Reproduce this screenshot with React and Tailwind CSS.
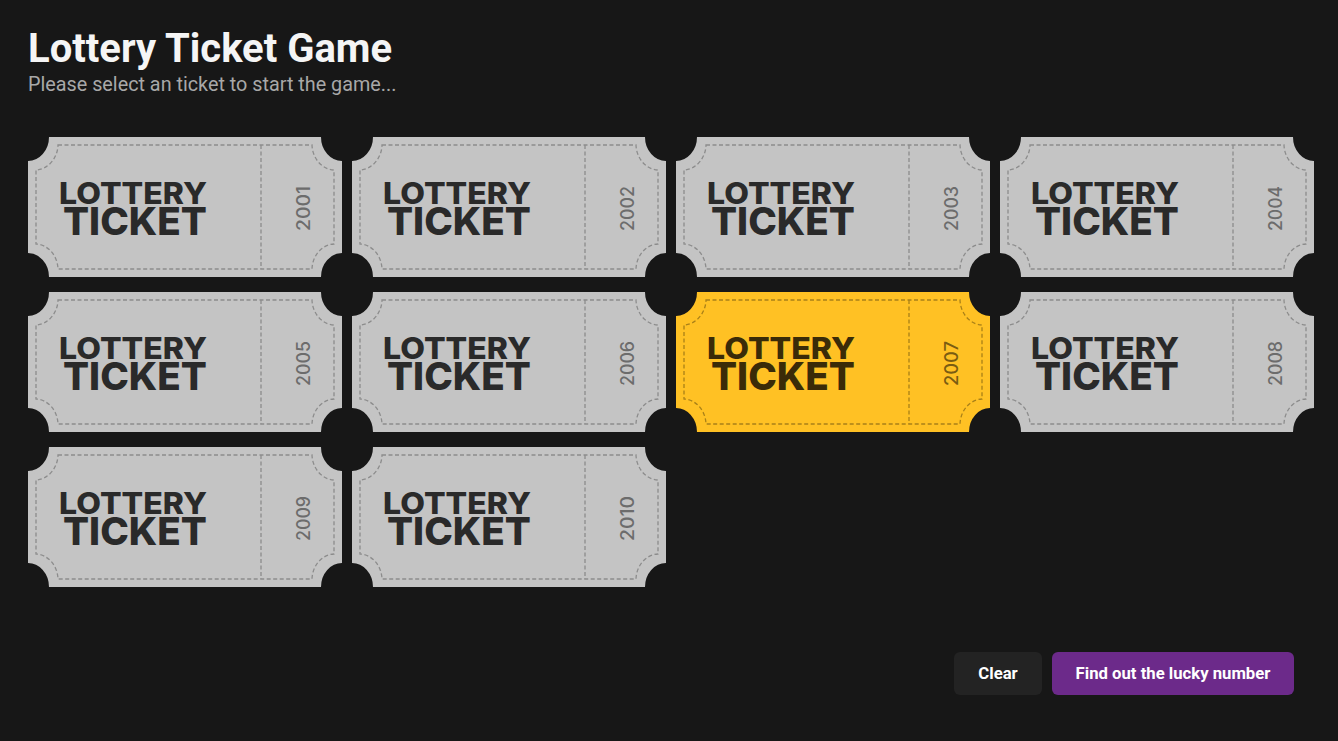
import React, { useState } from 'react';

const W = 314;
const H = 140;
const RX = 23;
const RY = 26;
const IN = 7;

const outline = `M${RX},0 H${W - RX} A${RX} ${RY} 0 0 0 ${W},${RY} V${H - RY} A${RX} ${RY} 0 0 0 ${W - RX},${H} H${RX} A${RX} ${RY} 0 0 0 0,${H - RY} V${RY} A${RX} ${RY} 0 0 0 ${RX},0 Z`;

const ix = RX + IN;
const iy = RY + IN;
const inner = `M${ix},${IN + 1} H${W - ix} A${RX} ${RY} 0 0 0 ${W - IN - 1},${iy} V${H - iy} A${RX} ${RY} 0 0 0 ${W - ix},${H - IN - 1} H${ix} A${RX} ${RY} 0 0 0 ${IN + 1},${H - iy} V${iy} A${RX} ${RY} 0 0 0 ${ix},${IN + 1} Z`;

const Ticket = ({ num, active, onClick }) => {
  const fill = active ? '#ffc124' : '#c4c4c4';
  const ink = active ? '#3a2b08' : '#2a2a2a';
  const dash = active ? '#a98018' : '#8c8c8c';
  const yearInk = active ? '#7a5c12' : '#6c6c6c';
  return (
    <button onClick={onClick} className="block w-[314px] h-[140px] cursor-pointer">
      <svg width={W} height={H} viewBox={`0 0 ${W} ${H}`} className="block">
        <path d={outline} fill={fill} stroke={fill} strokeWidth="4" strokeLinejoin="round" />
        <path d={inner} fill="none" stroke={dash} strokeWidth="1.3" strokeDasharray="4 2.5" />
        <line x1="233" y1={IN + 1} x2="233" y2={H - IN - 1} stroke={dash} strokeWidth="1.3" strokeDasharray="4 2.5" />
        <text
          x="31"
          y="67"
          fill={ink}
          fontFamily="Inter, 'Liberation Sans', sans-serif"
          fontWeight="800"
          fontSize="30"
          textLength="148"
          lengthAdjust="spacingAndGlyphs"
        >
          LOTTERY
        </text>
        <text
          x="35"
          y="98"
          fill={ink}
          fontFamily="Inter, 'Liberation Sans', sans-serif"
          fontWeight="800"
          fontSize="38.5"
          textLength="144"
          lengthAdjust="spacingAndGlyphs"
        >
          TICKET
        </text>
        <text
          transform="translate(282,71.5) rotate(-90)"
          textAnchor="middle"
          fill={yearInk}
          fontFamily="Inter, 'Liberation Sans', sans-serif"
          fontWeight="500"
          fontSize="18"
          textLength="45"
          lengthAdjust="spacingAndGlyphs"
        >
          {num}
        </text>
      </svg>
    </button>
  );
};

export default function App() {
  const [selected, setSelected] = useState(2007);
  const tickets = Array.from({ length: 10 }, (_, i) => 2001 + i);

  return (
    <div className="min-h-screen w-full bg-[#171717] font-['Roboto',sans-serif] pl-[28px] pt-[26px]">
      <h1 className="text-[40px] leading-[46px] font-bold text-[#f5f5f5]">Lottery Ticket Game</h1>
      <p className="text-[19.8px] leading-[26px] text-[#a8a8a8]">Please select an ticket to start the game...</p>

      <div className="mt-[39px] grid grid-cols-[repeat(4,314px)] gap-x-[10px] gap-y-[15px]">
        {tickets.map((n) => (
          <Ticket key={n} num={n} active={selected === n} onClick={() => setSelected(n)} />
        ))}
      </div>

      <div className="mt-[65px] w-[1266px] flex justify-end gap-[10px]">
        <button
          onClick={() => setSelected(null)}
          className="h-[43px] w-[88px] rounded-md bg-[#232323] text-white text-[16.7px] font-bold"
        >
          Clear
        </button>
        <button className="h-[43px] w-[242px] rounded-md bg-[#6c2a8a] text-white text-[16.7px] font-bold">
          Find out the lucky number
        </button>
      </div>
    </div>
  );
}
